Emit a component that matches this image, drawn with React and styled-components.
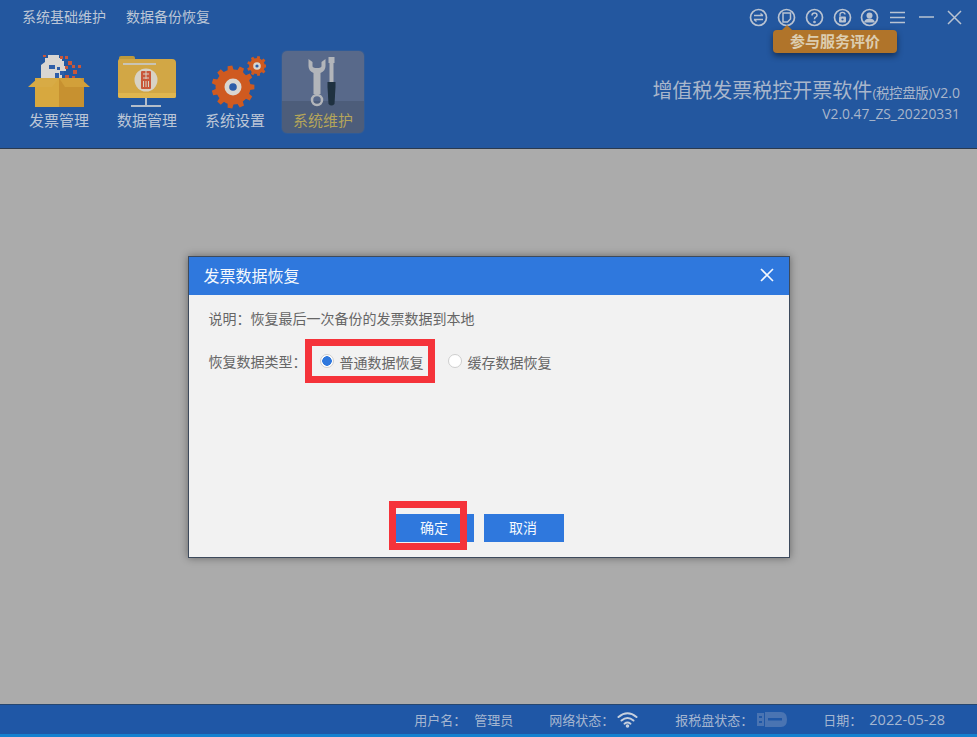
import React from 'react';
import styled, { createGlobalStyle } from 'styled-components';

const GlobalStyle = createGlobalStyle`
  html, body {
    margin: 0;
    padding: 0;
    height: 100%;
    background: #ababab;
    font-family: "Open Sans", "Noto Sans CJK SC", sans-serif;
  }
  #root {
    height: 100%;
  }
`;

const Page = styled.div`
  width: 977px;
  height: 737px;
  display: flex;
  flex-direction: column;
  overflow: hidden;
`;

const Header = styled.header`
  height: 148px;
  flex: none;
  background: #23579f;
  border-bottom: 1px solid #2b3a4e;
  display: flex;
  flex-direction: column;
  position: relative;
`;

const TopRow = styled.div`
  height: 50px;
  flex: none;
  display: flex;
  justify-content: space-between;
`;

const SubMenu = styled.nav`
  display: flex;
  gap: 20px;
  padding: 7px 0 0 22px;
  font-size: 14px;
  line-height: 20px;
  color: #bcc6d6;
`;

const WindowIcons = styled.div`
  display: flex;
  align-items: center;
  height: 34px;
  padding-right: 9px;
  color: #b9c3d2;
`;

const IconSlot = styled.span`
  width: ${({ $w }) => $w || 28}px;
  display: flex;
  justify-content: center;
`;

const Tip = styled.div`
  position: absolute;
  left: 773px;
  top: 30px;
  width: 124px;
  height: 23px;
  border-radius: 4px;
  background: #b0742a;
  box-shadow: 0 3px 6px rgba(0, 0, 0, 0.45);
  color: #dccdb0;
  font-size: 15px;
  font-weight: 700;
  line-height: 23px;
  text-align: center;
  &::before {
    content: '';
    position: absolute;
    left: 9px;
    top: -5px;
    border-left: 5px solid transparent;
    border-right: 5px solid transparent;
    border-bottom: 5px solid #b0742a;
  }
`;

const MainRow = styled.div`
  flex: 1;
  display: flex;
  justify-content: space-between;
  padding-left: 17px;
`;

const Nav = styled.div`
  display: flex;
  gap: 4px;
`;

const NavItem = styled.div`
  width: 84px;
  height: 84px;
  box-sizing: border-box;
  border-radius: 6px;
  display: flex;
  flex-direction: column;
  align-items: center;
  padding-top: 4px;
  border: 1px solid ${({ $active }) => ($active ? '#2f5b98' : 'transparent')};
  background: ${({ $active }) =>
    $active ? 'linear-gradient(#58698a 0 50px, #4d5d7a 50px)' : 'transparent'};
  color: ${({ $active }) => ($active ? '#b5a559' : '#bcc6d6')};
`;

const NavLabel = styled.span`
  font-size: 15px;
  line-height: 22px;
`;

const Brand = styled.div`
  text-align: right;
  padding: 28px 17px 0 0;
  color: #a9b6cb;
`;

const BrandTitle = styled.div`
  font-size: 20px;
  line-height: 26px;
  white-space: nowrap;
  display: flex;
  align-items: baseline;
  justify-content: flex-end;
`;

const BrandSmall = styled.span`
  font-size: 13.5px;
  letter-spacing: -0.4px;
`;

const BrandTail = styled.span`
  font-size: 14px;
`;

const BrandVersion = styled.div`
  font-size: 13.8px;
  line-height: 20px;
  margin-top: -2px;
`;

const Main = styled.main`
  flex: 1;
  background: #ababab;
  display: flex;
  justify-content: center;
  align-items: flex-start;
  padding-top: 107px;
`;

const Dialog = styled.section`
  width: 602px;
  height: 302px;
  box-sizing: border-box;
  border: 1px solid #3d4a5c;
  background: #f2f2f2;
  box-shadow: 0 0 8px rgba(0, 0, 0, 0.4);
  display: flex;
  flex-direction: column;
`;

const DialogHead = styled.div`
  height: 38px;
  flex: none;
  box-sizing: border-box;
  background: #2f78dd;
  display: flex;
  align-items: center;
  justify-content: space-between;
  padding: 0 14px 2px 15px;
  color: #f4f8fd;
  font-size: 16px;
`;

const DialogBody = styled.div`
  flex: 1;
  padding: 13px 20px 0;
  font-size: 14px;
  color: #666;
`;

const Note = styled.p`
  margin: 0;
  height: 22px;
  line-height: 22px;
`;

const TypeRow = styled.div`
  display: flex;
  align-items: center;
  margin-top: 9px;
`;

const TypeLabel = styled.span`
  width: 96px;
  flex: none;
  white-space: nowrap;
`;

const RadioOption = styled.label`
  box-sizing: border-box;
  width: ${({ $marked }) => ($marked ? '130px' : 'auto')};
  height: 44px;
  display: flex;
  align-items: center;
  gap: 6px;
  padding: 2px 0 0 ${({ $marked }) => ($marked ? '8px' : '13px')};
  border: ${({ $marked }) => ($marked ? '7px solid #f5333a' : '0')};
  font-size: 14px;
  white-space: nowrap;
  background: #f2f2f2;
  position: relative;
`;

const RadioDot = styled.span`
  width: 14px;
  height: 14px;
  flex: none;
  box-sizing: border-box;
  border-radius: 50%;
  border: 1px solid #cfcfcf;
  background: ${({ $on }) =>
    $on ? 'radial-gradient(circle, #2f78dd 0 4.5px, #fff 5px)' : '#fff'};
  margin-top: -2px;
`;

const Actions = styled.div`
  display: flex;
  gap: 10px;
  padding: 0 0 15px 207px;
`;

const ActionWrap = styled.div`
  position: relative;
`;

const ActionButton = styled.button`
  width: ${({ $w }) => $w}px;
  height: 28px;
  border: 0;
  padding: 0 1px 2px 0;
  display: block;
  background: #2f78dd;
  color: #f4f8fd;
  font: inherit;
  font-size: 14px;
`;

const RedMark = styled.span`
  position: absolute;
  left: -7px;
  top: -13px;
  width: 78px;
  height: 49px;
  box-sizing: border-box;
  border: 7px solid #f5333a;
  background: linear-gradient(#f2f2f2 0 6px, transparent 6px, transparent 34px, #f2f2f2 34px);
  pointer-events: none;
`;

const Footer = styled.footer`
  height: 33px;
  flex: none;
  box-sizing: border-box;
  background: #1f57a6;
  border-top: 1px solid #26466f;
  border-bottom: 3px solid #1580cf;
  display: flex;
  justify-content: flex-end;
  align-items: center;
  padding-right: 32px;
  font-size: 13px;
  color: #a5b6d0;
`;

const StatusItem = styled.span`
  display: flex;
  align-items: center;
  margin-left: ${({ $gap }) => $gap}px;
  white-space: nowrap;
`;

const StatusValue = styled.span`
  margin-left: ${({ $gap }) => $gap}px;
  display: flex;
  align-items: center;
`;

const DateValue = styled(StatusValue)`
  font-size: 14.500px;
`;

// gear outline: teeth placed round a circle
const gearPath = (cx, cy, r, tooth, count) => {
  let d = '';
  for (let i = 0; i < count; i++) {
    const step = (Math.PI * 2) / count;
    const a = i * step;
    const w = step * 0.24;
    const pts = [
      [r, a - w * 1.3],
      [r + tooth, a - w * 0.8],
      [r + tooth, a + w * 0.8],
      [r, a + w * 1.3],
    ];
    pts.forEach(([rad, ang], j) => {
      const x = (cx + rad * Math.cos(ang)).toFixed(2);
      const y = (cy + rad * Math.sin(ang)).toFixed(2);
      d += `${i === 0 && j === 0 ? 'M' : 'L'}${x} ${y} `;
    });
  }
  return d + 'Z';
};

const BoxIcon = () => (
  <svg width="64" height="54" viewBox="0 0 64 54">
    <g transform="translate(0 -2)">
      <path d="M14 25V12l4-3V5h3V2h11v3h3v3h2v5h2v5h-4v7z" fill="#d9d6d2" />
      <path d="M16 1h3v3h-3zM33 3h3v3h-3z" fill="#c9573a" />
      <path d="M22 12h6v4h-6zM30 14h3v3h-3zM33 18h4v4h-4zM28 20h4v5h-4z" fill="#2f5ea8" />
      <path d="M38 13h3v3h-3zM41 8h4v4h-4zM45 12h3v3h-3zM38 22h4v4h-4zM46 17h4v4h-4zM51 12h3v3h-3zM45 23h3v3h-3zM38 3h3v3h-3z" fill="#c9573a" />
    </g>
    <path d="M8 23h24v29H8z" fill="#d7a83f" />
    <path d="M32 23h25v29H32z" fill="#c79130" />
    <path d="M11 23L1 32h24l7-9z" fill="#d8ab45" />
    <path d="M32 23l6 9h25l-10-9z" fill="#d2a03a" />
  </svg>
);

const FolderIcon = () => (
  <svg width="60" height="54" viewBox="0 0 60 54">
    <path d="M2 3q0-2 2-2h12q2 0 2 2v2H2z" fill="#bd9a3c" />
    <path d="M1 6q0-2 2-2h52q4 0 4 4v33q0 2-2 2H3q-2 0-2-2z" fill="#d2a745" />
    <path d="M1 38h58v3q0 2-2 2H3q-2 0-2-2z" fill="#e0b64f" />
    <path d="M6 8h33v2H6z" fill="#c9c4b4" />
    <circle cx="29" cy="25" r="11.500" fill="#d8d2c4" />
    <rect x="24" y="16" width="10" height="18" rx="1" fill="#c9573a" />
    <path d="M26 19h6M26 23h6M29 16v8M26.500 26v6M29 26v6M31.500 26v6" stroke="#d8d2c4" strokeWidth="1" />
    <path d="M29 43v8" stroke="#b4bdc9" strokeWidth="2" />
    <path d="M14 51h30" stroke="#b4bdc9" strokeWidth="2" />
  </svg>
);

const GearIcon = () => (
  <svg width="62" height="54" viewBox="-6 0 62 54">
    <path d={gearPath(23, 32, 17, 4.5, 11)} fill="#cf5a20" />
    <circle cx="23" cy="32" r="17.500" fill="#cf5a20" />
    <circle cx="23" cy="32" r="8.500" fill="#d9d6d0" />
    <circle cx="23" cy="32" r="3.800" fill="#2b5ca8" />
    <path d={gearPath(47, 11, 7.5, 2.5, 9)} fill="#cf5a20" />
    <circle cx="47" cy="11" r="7.800" fill="#cf5a20" />
    <circle cx="47" cy="11" r="3.800" fill="#d9d6d0" />
    <circle cx="47" cy="11" r="1.600" fill="#2b5ca8" />
  </svg>
);

const ToolsIcon = () => (
  <svg width="36" height="54" viewBox="-2.500 -2 36 54">
    <path d="M1 2v7q0 5 5 7v21h7V16q5-2 5-7V2l-4 3v4q0 2-4.500 2T5 9V5z" fill="#b2b5ba" />
    <circle cx="9.500" cy="43" r="5" fill="none" stroke="#b2b5ba" strokeWidth="2.500" />
    <path d="M21 0h6v6h-1v19h-4V6h-1z" fill="#b2b5ba" />
    <path d="M20 25h8v5l-1 17q-3 3-6 0l-1-17z" fill="#1f3140" />
  </svg>
);

const Ring = ({ children }) => (
  <svg width="19" height="19" viewBox="0 0 19 19" fill="none" stroke="currentColor" strokeWidth="1.700">
    <circle cx="9.500" cy="9.500" r="8" />
    {children}
  </svg>
);

const WifiIcon = () => (
  <svg width="21" height="17" viewBox="0 0 21 17" fill="none" stroke="#c6d0de" strokeWidth="2" strokeLinecap="round">
    <path d="M1.500 6q9-7.500 18 0" />
    <path d="M4.500 9.500q6-5 12 0" />
    <path d="M7.500 12.700q3-2.400 6 0" />
    <circle cx="10.500" cy="15" r="0.800" fill="#c6d0de" />
  </svg>
);

const DiskIcon = () => (
  <svg width="30" height="17" viewBox="0 0 30 17">
    <path d="M0 2h7v13H0z" fill="#4a74b2" />
    <path d="M2 5h3v2H2zM2 10h3v2H2z" fill="#1f57a6" />
    <path d="M8 1h16q6 0 6 7.500T24 16H8z" fill="#4a74b2" />
    <path d="M11 7h14v2.500H11z" fill="#1f57a6" />
  </svg>
);

const navItems = [
  { label: '发票管理', icon: <BoxIcon /> },
  { label: '数据管理', icon: <FolderIcon /> },
  { label: '系统设置', icon: <GearIcon /> },
  { label: '系统维护', icon: <ToolsIcon />, active: true },
];

export default function App() {
  return (
    <Page>
      <GlobalStyle />
      <Header>
        <TopRow>
          <SubMenu>
            <span>系统基础维护</span>
            <span>数据备份恢复</span>
          </SubMenu>
          <WindowIcons>
            <IconSlot>
              <Ring>
                <path d="M5 7.500h9M5 11.500h9M11.500 5.500l2.500 2M7.500 13.500l-2.500-2" strokeWidth="1.300" />
              </Ring>
            </IconSlot>
            <IconSlot>
              <Ring>
                <path d="M6 5h7.500v6l-3 3H6z" strokeWidth="1.500" />
              </Ring>
            </IconSlot>
            <IconSlot>
              <Ring>
                <path d="M7 7.500q0-2.500 2.500-2.500t2.500 2.200q0 1.300-1.300 2-1.200.7-1.200 2" strokeWidth="1.500" />
                <circle cx="9.500" cy="14" r="0.500" fill="currentColor" />
              </Ring>
            </IconSlot>
            <IconSlot>
              <Ring>
                <path d="M7 8.500V6.500q0-2.200 2.500-2.200T12 6.500" strokeWidth="1.300" />
                <rect x="6" y="8.500" width="7" height="6" rx="1" fill="currentColor" stroke="none" />
                <circle cx="9.500" cy="11.500" r="1.100" fill="#23579f" stroke="none" />
              </Ring>
            </IconSlot>
            <IconSlot $w={26}>
              <Ring>
                <circle cx="9.500" cy="7.500" r="3" fill="currentColor" stroke="none" />
                <path d="M4 14.500q1-4 5.500-4t5.500 4z" fill="currentColor" stroke="none" />
              </Ring>
            </IconSlot>
            <IconSlot $w={30}>
              <svg width="15" height="13" viewBox="0 0 15 13" stroke="currentColor" strokeWidth="1.500">
                <path d="M0 1.500h15M0 6.500h15M0 11.500h15" />
              </svg>
            </IconSlot>
            <IconSlot>
              <svg width="15" height="4" viewBox="0 0 15 4" stroke="currentColor" strokeWidth="1.500">
                <path d="M0 2h15" />
              </svg>
            </IconSlot>
            <IconSlot>
              <svg width="15" height="15" viewBox="0 0 15 15" stroke="currentColor" strokeWidth="1.500">
                <path d="M1 1l13 13M14 1L1 14" />
              </svg>
            </IconSlot>
          </WindowIcons>
        </TopRow>
        <Tip>参与服务评价</Tip>
        <MainRow>
          <Nav>
            {navItems.map((item) => (
              <NavItem key={item.label} $active={item.active}>
                {item.icon}
                <NavLabel>{item.label}</NavLabel>
              </NavItem>
            ))}
          </Nav>
          <Brand>
            <BrandTitle>
              增值税发票税控开票软件<BrandSmall>(税控盘版)</BrandSmall><BrandTail>V2.0</BrandTail>
            </BrandTitle>
            <BrandVersion>V2.0.47_ZS_20220331</BrandVersion>
          </Brand>
        </MainRow>
      </Header>
      <Main>
        <Dialog>
          <DialogHead>
            <span>发票数据恢复</span>
            <svg width="16" height="16" viewBox="0 0 16 16" stroke="#f4f8fd" strokeWidth="1.600">
              <path d="M2 2l12 12M14 2L2 14" />
            </svg>
          </DialogHead>
          <DialogBody>
            <Note>说明：恢复最后一次备份的发票数据到本地</Note>
            <TypeRow>
              <TypeLabel>恢复数据类型：</TypeLabel>
              <RadioOption $marked>
                <RadioDot $on />
                普通数据恢复
              </RadioOption>
              <RadioOption>
                <RadioDot />
                缓存数据恢复
              </RadioOption>
            </TypeRow>
          </DialogBody>
          <Actions>
            <ActionWrap>
              <ActionButton $w={78}>确定</ActionButton>
              <RedMark />
            </ActionWrap>
            <ActionWrap>
              <ActionButton $w={80}>取消</ActionButton>
            </ActionWrap>
          </Actions>
        </Dialog>
      </Main>
      <Footer>
        <StatusItem>
          用户名：<StatusValue $gap={8}>管理员</StatusValue>
        </StatusItem>
        <StatusItem $gap={36}>
          网络状态：<StatusValue $gap={3}><WifiIcon /></StatusValue>
        </StatusItem>
        <StatusItem $gap={37}>
          报税盘状态：<StatusValue $gap={4}><DiskIcon /></StatusValue>
        </StatusItem>
        <StatusItem $gap={36}>
          日期：<DateValue $gap={7}>2022-05-28</DateValue>
        </StatusItem>
      </Footer>
    </Page>
  );
}
